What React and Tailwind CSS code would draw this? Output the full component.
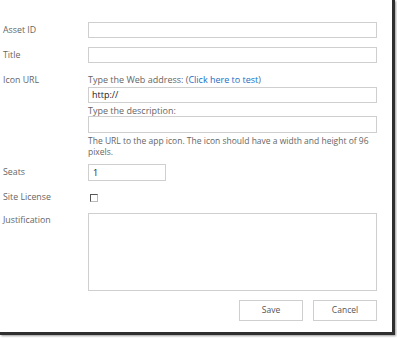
export default function App() {
  const label = "text-[8.8px] text-[#666] leading-none";
  const input = "border border-[#cfcfcf] bg-white";
  return (
    <div className="w-[397px] h-[338px] bg-white relative overflow-hidden" style={{ fontFamily: '"Open Sans", "Liberation Sans", sans-serif' }}>
      <div className="w-[395px] h-[335px] bg-white border-r-[3px] border-b-[3px] border-[#2f2f2f] shadow-[1px_1px_2px_rgba(0,0,0,0.4)] pt-[22px] pl-[3px] flex flex-col">
        {/* Asset ID */}
        <div className="flex items-center h-[16px]">
          <div className={`w-[85px] ${label}`}>Asset ID</div>
          <div className={`w-[289px] h-[16px] ${input}`}></div>
        </div>
        {/* Title */}
        <div className="flex items-center h-[16px] mt-[9px]">
          <div className={`w-[85px] ${label}`}>Title</div>
          <div className={`w-[289px] h-[16px] ${input}`}></div>
        </div>
        {/* Icon URL */}
        <div className="flex mt-[12px]">
          <div className={`w-[85px] ${label} pt-[1px]`}>Icon URL</div>
          <div className="flex flex-col w-[289px]">
            <div className="text-[9px] text-[#666] leading-none">
              Type the Web address: (<span className="text-[#1a6fc4]">Click here to test</span>)
            </div>
            <div className={`h-[16px] mt-[3px] ${input} flex items-center pl-[3px] text-[9px] text-[#222]`}>http://</div>
            <div className="text-[9px] text-[#666] leading-none mt-[3px]">Type the description:</div>
            <div className={`h-[17px] mt-[1px] ${input}`}></div>
            <div className="text-[8.5px] text-[#666] leading-[11px] mt-[2px] -mr-[4px]">
              The URL to the app icon. The icon should have a width and height of 96 pixels.
            </div>
          </div>
        </div>
        {/* Seats */}
        <div className="flex items-center h-[17px] mt-[7px]">
          <div className={`w-[85px] ${label}`}>Seats</div>
          <div className={`w-[78px] h-[17px] ${input} flex items-center pl-[4px] text-[9px] text-[#222]`}>1</div>
        </div>
        {/* Site License */}
        <div className="flex items-center h-[9px] mt-[12px]">
          <div className={`w-[85px] ${label}`}>Site License</div>
          <div className="ml-[2px] w-[8px] h-[8px] border border-[#555] border-r-[#bbb] border-b-[#bbb] bg-white"></div>
        </div>
        {/* Justification */}
        <div className="flex mt-[11px]">
          <div className={`w-[85px] ${label} pt-[3px]`}>Justification</div>
          <div className={`w-[289px] h-[78px] ${input}`}></div>
        </div>
        {/* Buttons */}
        <div className="flex justify-end gap-[10px] w-[374px] mt-[9px]">
          <div className={`w-[64px] h-[21px] ${input} flex items-center justify-center text-[8.5px] text-[#555]`}>Save</div>
          <div className={`w-[64px] h-[21px] ${input} flex items-center justify-center text-[8.5px] text-[#555]`}>Cancel</div>
        </div>
      </div>
    </div>
  );
}
